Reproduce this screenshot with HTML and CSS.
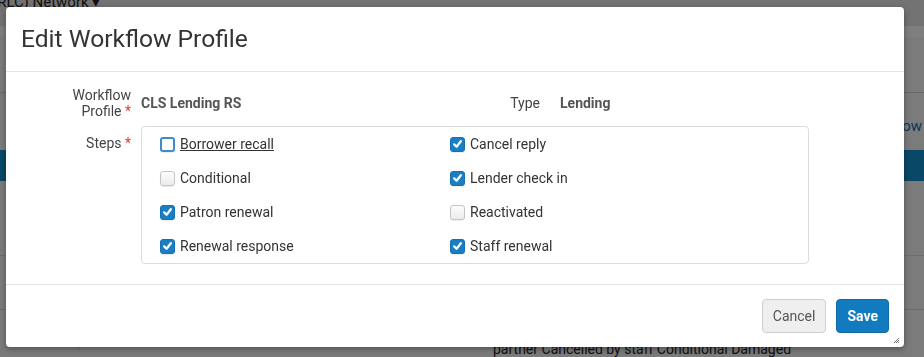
FILE: index.html
```html
<!DOCTYPE html>
<html lang="en">
<head>
  <meta charset="UTF-8" />
  <title>Edit Workflow Profile</title>
  <link rel="stylesheet" href="styles.css">
</head>
<body>
  <div class="page">
    <div class="topbar"><span class="net">(RLC) Network &#9662;</span></div>
    <div class="strip"></div>
    <div class="band-gap"></div>
    <div class="row-line"></div>
    <div class="link-row"><span class="link">Workflow</span></div>
    <div class="blue-band"></div>
    <div class="rows">
      <div class="row"></div>
      <div class="row"></div>
    </div>
    <div class="bottom-text"><span class="cell"></span><span class="txt">partner Cancelled by staff Conditional Damaged</span></div>
  </div>

  <div class="overlay"></div>

  <div class="modal">
    <div class="modal-header">
      <h4>Edit Workflow Profile</h4>
    </div>
    <div class="modal-body">
      <div class="field-row">
        <label class="field-label">Workflow<br>Profile <span class="req">*</span></label>
        <div class="field-value">CLS Lending RS</div>
        <label class="type-label">Type</label>
        <div class="type-value">Lending</div>
      </div>
      <div class="field-row steps-row">
        <label class="field-label steps-label">Steps <span class="req">*</span></label>
        <div class="steps-box">
          <div class="step"><span class="cb focus"></span><span class="step-text underline">Borrower recall</span></div>
          <div class="step"><span class="cb checked"><svg viewBox="0 0 14 14"><path d="M3.4 7.4 L6 10 L10.6 4" /></svg></span><span class="step-text">Cancel reply</span></div>
          <div class="step"><span class="cb"></span><span class="step-text">Conditional</span></div>
          <div class="step"><span class="cb checked"><svg viewBox="0 0 14 14"><path d="M3.4 7.4 L6 10 L10.6 4" /></svg></span><span class="step-text">Lender check in</span></div>
          <div class="step"><span class="cb checked"><svg viewBox="0 0 14 14"><path d="M3.4 7.4 L6 10 L10.6 4" /></svg></span><span class="step-text">Patron renewal</span></div>
          <div class="step"><span class="cb"></span><span class="step-text">Reactivated</span></div>
          <div class="step"><span class="cb checked"><svg viewBox="0 0 14 14"><path d="M3.4 7.4 L6 10 L10.6 4" /></svg></span><span class="step-text">Renewal response</span></div>
          <div class="step"><span class="cb checked"><svg viewBox="0 0 14 14"><path d="M3.4 7.4 L6 10 L10.6 4" /></svg></span><span class="step-text">Staff renewal</span></div>
        </div>
      </div>
    </div>
    <div class="modal-footer">
      <button class="btn btn-default">Cancel</button>
      <button class="btn btn-primary">Save</button>
    </div>
    <svg class="grip" viewBox="0 0 8 8"><path d="M7 2 L2 7 M7 4 L4 7 M7 6 L6 7" /></svg>
  </div>
</body>
</html>
```

FILE: styles.css
```css
body {
  margin: 0;
  font-family: Roboto, "Liberation Sans", Arial, sans-serif;
  font-size: 14px;
  color: #333;
  overflow: hidden;
}

/* page behind the dialog */
.page {
  height: 357px;
  background: #f6f6f6;
  overflow: hidden;
}
.topbar {
  height: 33px;
  background: #e6e6e6;
}
.net {
  display: block;
  margin: -7px 0 0 -8px;
  font-size: 15px;
  color: #222;
}
.strip {
  height: 11px;
  background: #fff;
}
.band-gap {
  height: 55px;
}
.row-line {
  height: 1px;
  background: #d2d2d2;
}
.link-row {
  height: 57px;
  text-align: right;
}
.link {
  display: inline-block;
  margin: 24px 2px 0 0;
  font-size: 15px;
  color: #1a6fb0;
}
.blue-band {
  height: 31px;
  background: #1290cf;
}
.rows .row {
  height: 53px;
  border-bottom: 1px solid #d8d8d8;
}
.rows .row:first-child {
  height: 74px;
}
.bottom-text {
  display: flex;
  height: 40px;
}
.bottom-text .cell {
  width: 78px;
  border-right: 1px solid #d8d8d8;
  margin-top: 30px;
}
.bottom-text .txt {
  margin: 31px 0 0 414px;
  font-size: 14px;
  color: #222;
  line-height: 16px;
}

.overlay {
  position: fixed;
  inset: 0;
  background: rgba(0, 0, 0, 0.5);
}

/* dialog */
.modal {
  position: absolute;
  left: 6px;
  top: 7px;
  width: 898px;
  background: #fff;
  border-radius: 4px;
  box-shadow: 0 2px 6px rgba(0, 0, 0, 0.35);
}
.modal-header {
  padding: 19px 15px;
  border-bottom: 1px solid #e5e5e5;
}
.modal-header h4 {
  margin: 0;
  font-size: 24.6px;
  font-weight: 400;
  line-height: 26px;
  color: #333;
}
.modal-body {
  padding: 15px 15px 20px;
}
.field-row {
  display: flex;
  align-items: center;
}
.field-label {
  width: 110px;
  flex: none;
  text-align: right;
  line-height: 16px;
  color: #444;
}
.req {
  color: #e03a3a;
}
.field-value {
  width: 300px;
  margin-left: 10px;
  font-weight: 700;
  color: #555;
}
.type-label {
  width: 99px;
  text-align: right;
  color: #444;
}
.type-value {
  margin-left: 20px;
  font-weight: 700;
  color: #555;
}
.steps-row {
  align-items: flex-start;
  margin-top: 7px;
}
.steps-label {
  line-height: 34px;
}
.steps-box {
  margin-left: 10px;
  width: 648px;
  padding: 0 0 0 18px;
  border: 1px solid #dcdcdc;
  border-radius: 4px;
  display: grid;
  grid-template-columns: 290px 1fr;
  grid-auto-rows: 34px;
}
.step {
  display: flex;
  align-items: center;
  gap: 5px;
}
.step-text {
  color: #333;
}
.underline {
  text-decoration: underline;
}
.cb {
  box-sizing: border-box;
  width: 15px;
  height: 15px;
  border: 1px solid #c4c4c4;
  border-radius: 3px;
  background: linear-gradient(#fcfcfc, #ececec);
  box-shadow: 0 1px 1px rgba(0, 0, 0, 0.08);
  display: flex;
  align-items: center;
  justify-content: center;
}
.cb.focus {
  border: 2px solid #3f8ccb;
  background: #fff;
}
.cb.checked {
  border: 1px solid #1670b3;
  background: #1a7ec3;
}
.cb svg {
  width: 14px;
  height: 14px;
  fill: none;
  stroke: #fff;
  stroke-width: 2.4;
  stroke-linecap: round;
  stroke-linejoin: round;
}
.modal-footer {
  display: flex;
  justify-content: flex-end;
  gap: 10px;
  padding: 14px 15px;
  border-top: 1px solid #e5e5e5;
}
.btn {
  font-family: Roboto, "Liberation Sans", Arial, sans-serif;
  font-size: 14px;
  height: 34px;
  padding: 0 10px;
  border-radius: 4px;
  cursor: pointer;
}
.btn-default {
  background: #efefef;
  border: 1px solid #cfcfcf;
  color: #555;
}
.btn-primary {
  background: #127bbf;
  border: 1px solid #0f6aa6;
  color: #fff;
  font-weight: 700;
}
.grip {
  position: absolute;
  right: 4px;
  bottom: 3px;
  width: 8px;
  height: 8px;
  fill: none;
  stroke: #555;
  stroke-width: 0.8;
}
```
